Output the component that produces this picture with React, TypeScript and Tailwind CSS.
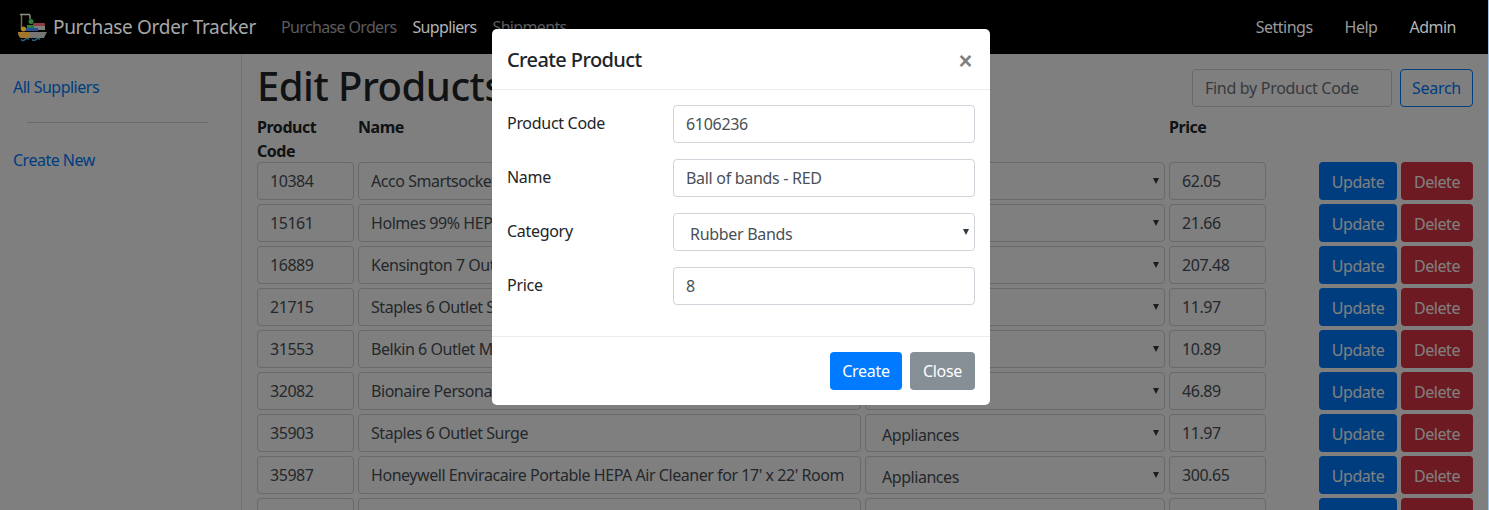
const products = [
  { code: "10384", name: "Acco Smartsocket Table Surge Protector", category: "Appliances", price: "62.05" },
  { code: "15161", name: "Holmes 99% HEPA Air Purifier", category: "Appliances", price: "21.66" },
  { code: "16889", name: "Kensington 7 Outlet MasterPiece", category: "Appliances", price: "207.48" },
  { code: "21715", name: "Staples 6 Outlet Surge", category: "Appliances", price: "11.97" },
  { code: "31553", name: "Belkin 6 Outlet Metallic Surge Strip", category: "Appliances", price: "10.89" },
  { code: "32082", name: "Bionaire Personal Filtered Air", category: "Appliances", price: "46.89" },
  { code: "35903", name: "Staples 6 Outlet Surge", category: "Appliances", price: "11.97" },
  { code: "35987", name: "Honeywell Enviracaire Portable HEPA Air Cleaner for 17' x 22' Room", category: "Appliances", price: "300.65" },
  { code: "36123", name: "Fellowes Basic Home/Office Series Surge", category: "Appliances", price: "14.98" },
];

function ShipLogo() {
  return (
    <svg width="31" height="29" viewBox="0 0 31 29" className="shrink-0">
      {/* crane */}
      <path d="M4.500 1v16" stroke="#7a6c42" strokeWidth="1.5" />
      <path d="M3 1.500h10M13 2v4" stroke="#8f8f88" strokeWidth="1.500" fill="none" />
      {/* containers */}
      <circle cx="14" cy="8.500" r="2.500" fill="#2f8038" />
      <rect x="16" y="10" width="12" height="3" rx="1" fill="#8f3d46" />
      <rect x="10" y="12" width="7" height="3" fill="#26803a" />
      <rect x="17" y="13" width="11" height="4" fill="#7a827b" />
      <rect x="9" y="15" width="12" height="3" fill="#234f94" />
      <circle cx="6.500" cy="16" r="2.500" fill="#b58a1c" />
      {/* hull */}
      <path d="M1 19h29l-3 6H4q-3-2-3-6z" fill="#767676" />
      <path d="M1 19h12v6H4q-3-2-3-6z" fill="#a3762a" />
      {/* water */}
      <path d="M4 26.500q2 2 4 0t4 0M15 26.500q2 2 4 0t4 0" stroke="#266a80" strokeWidth="1.200" fill="none" />
    </svg>
  );
}

function Navbar() {
  return (
    <nav className="relative z-20 flex h-[54px] items-center bg-black pl-[17px] pr-[33px]">
      <ShipLogo />
      <span className="ml-[5px] text-[19px] tracking-[-0.32px] text-[#a8a8a8]">Purchase Order Tracker</span>
      <div className="ml-[25px] flex gap-4 tracking-[-0.65px]">
        <a className="text-[#5c5c5c]">Purchase Orders</a>
        <a className="text-[#b4b4b4]">Suppliers</a>
        <a className="text-[#5c5c5c]">Shipments</a>
      </div>
      <div className="ml-auto flex gap-8 tracking-[-0.5px]">
        <a className="text-[#9a9a9a]">Settings</a>
        <a className="text-[#9a9a9a]">Help</a>
        <a className="text-[#b4b4b4]">Admin</a>
      </div>
    </nav>
  );
}

function Sidebar() {
  return (
    <aside className="w-[242px] shrink-0 border-r border-[#dee2e6] pl-[13px] pt-[21px] tracking-[-0.5px] text-[#007bff]">
      <a className="block">All Suppliers</a>
      <hr className="mb-[25px] ml-[14px] mr-[33px] mt-[23px] border-[#d2d2d2]" />
      <a className="block">Create New</a>
    </aside>
  );
}

function SelectBox({ value }: { value: string }) {
  return (
    <div className="relative h-[38px]">
      <select
        defaultValue={value}
        className="h-[38px] w-full appearance-none rounded border border-[#ced4da] bg-white pl-[16px] pt-[3px] text-[#495057]"
      >
        <option>{value}</option>
      </select>
      <span className="absolute right-[6px] top-[16px] h-0 w-0 border-l-[3.5px] border-r-[3.5px] border-t-[6px] border-l-transparent border-r-transparent border-t-[#343a40]" />
    </div>
  );
}

function ProductRow({ code, name, category, price }: (typeof products)[number]) {
  return (
    <div className="grid grid-cols-[97px_503px_300px_97px_1fr] gap-1">
      <input defaultValue={code} className="h-[38px] rounded border border-[#ced4da] px-3 text-[#495057]" />
      <input defaultValue={name} className="h-[38px] rounded border border-[#ced4da] px-3 text-[#495057]" />
      <SelectBox value={category} />
      <input defaultValue={price} className="h-[38px] rounded border border-[#ced4da] px-3 text-[#495057]" />
      <div className="flex justify-end gap-1">
        <button className="h-[38px] w-[78px] rounded bg-[#007bff] pt-px text-white">Update</button>
        <button className="h-[38px] w-[72px] rounded bg-[#dc3545] pt-px text-white">Delete</button>
      </div>
    </div>
  );
}

function FormRow({ label, children }: { label: string; children: React.ReactNode }) {
  return (
    <div className="flex items-center justify-between">
      <span className="mb-[2px]">{label}</span>
      <div className="w-[302px]">{children}</div>
    </div>
  );
}

function CreateProductModal() {
  const inputClass = "h-[38px] w-full rounded border border-[#ced4da] px-3 text-[#495057]";
  return (
    <div className="absolute left-[492px] top-[29px] z-30 w-[498px] rounded-[5px] bg-white tracking-[-0.3px] text-[#212529]">
      <div className="flex h-[61px] items-center justify-between border-b border-[#e9ecef] pl-[15px] pr-[18px]">
        <h5 className="mt-[2px] text-[20px] font-medium tracking-[-0.6px]">Create Product</h5>
        <span className="mt-[4px] font-['Liberation_Sans',sans-serif] text-[23px] font-bold leading-none text-[#808080]">×</span>
      </div>
      <div className="flex flex-col gap-4 px-[15px] pt-[15px]">
        <FormRow label="Product Code">
          <input defaultValue="6106236" className={inputClass} />
        </FormRow>
        <FormRow label="Name">
          <input defaultValue="Ball of bands - RED" className={inputClass} />
        </FormRow>
        <FormRow label="Category">
          <SelectBox value="Rubber Bands" />
        </FormRow>
        <FormRow label="Price">
          <input defaultValue="8" className={inputClass} />
        </FormRow>
      </div>
      <div className="mt-[31px] flex h-[69px] justify-end gap-2 border-t border-[#e9ecef] pr-[15px] pt-[15px]">
        <button className="h-[38px] w-[72px] rounded bg-[#007bff] text-white">Create</button>
        <button className="h-[38px] w-[65px] rounded bg-[#868e96] text-white">Close</button>
      </div>
    </div>
  );
}

export default function App() {
  return (
    <div className="relative h-[510px] overflow-hidden bg-white font-['Noto_Sans',sans-serif] text-[16px]">
      <Navbar />
      <div className="flex h-[456px]">
        <Sidebar />
        <main className="min-w-0 flex-1 pl-[15px] pr-[16px] tracking-[-0.45px] text-[#212529]">
          <div className="flex h-[61px] items-start justify-between pt-[15px]">
            <h1 className="mt-[-7px] text-[40px] font-medium leading-[48px] tracking-[-0.5px]">Edit Products</h1>
            <div className="flex gap-2 tracking-[-0.3px]">
              <input placeholder="Find by Product Code" className="h-[38px] w-[200px] rounded border border-[#ced4da] px-3 placeholder:text-[#6c757d]" />
              <button className="h-[38px] w-[73px] rounded border border-[#007bff] text-[#007bff]">Search</button>
            </div>
          </div>
          <div className="grid h-[47px] grid-cols-[97px_503px_300px_97px_1fr] gap-1 font-bold leading-6">
            <div>Product Code</div>
            <div>Name</div>
            <div>Category</div>
            <div>Price</div>
          </div>
          <div className="flex flex-col gap-1">
            {products.map((p) => (
              <ProductRow key={p.code} {...p} />
            ))}
          </div>
        </main>
      </div>
      <div className="absolute inset-0 z-10 bg-black/50" />
      <CreateProductModal />
      <div className="absolute bottom-0 right-0 top-0 z-40 w-px bg-[#9cc3e6]" />
    </div>
  );
}
